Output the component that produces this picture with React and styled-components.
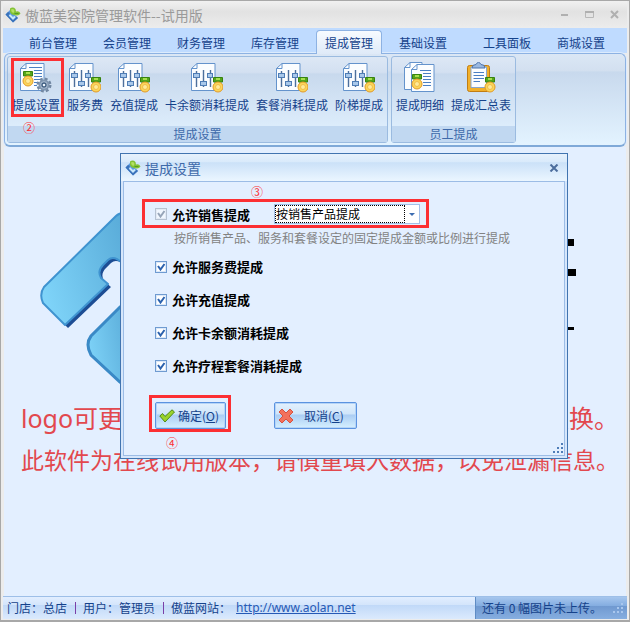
import React, { useState } from 'react';
import styled, { createGlobalStyle } from 'styled-components';

const tabs = ['前台管理', '会员管理', '财务管理', '库存管理', '提成管理', '基础设置', '工具面板', '商城设置'];

const settingTools = [
    { label: '提成设置', icon: 'settings', step: '②' },
    { label: '服务费', icon: 'sliders' },
    { label: '充值提成', icon: 'sliders' },
    { label: '卡余额消耗提成', icon: 'sliders' },
    { label: '套餐消耗提成', icon: 'sliders' },
    { label: '阶梯提成', icon: 'sliders' }
];

const staffTools = [
    { label: '提成明细', icon: 'details' },
    { label: '提成汇总表', icon: 'clipboard' }
];

const options = [
    { name: 'service', label: '允许服务费提成' },
    { name: 'recharge', label: '允许充值提成' },
    { name: 'card', label: '允许卡余额消耗提成' },
    { name: 'package', label: '允许疗程套餐消耗提成' }
];

const bladePath =
    'M84 1 Q79 1 76 4 L4 75 Q-1 82 3 91 L25 113 L68 72 L61 66 Q57 59 63 53 L68 48 Q74 43 82 51 L90 56 V1 Z';

const AppIcon = () => (
    <svg width="16" height="16" viewBox="0 0 16 16">
        <path d="M0.500 7.500 L5 3 L13 11 L8 15.500 Z" fill="#5b9ade" />
        <path d="M0.500 7.500 L8 15.500 L13 11 L11.500 9.500 L8 12.500 L3.500 8 L5 6 L3 5 Z" fill="#3a72ba" />
        <path d="M4.500 8 L8 11.500 L10 9.500" fill="none" stroke="#c9e8fb" strokeWidth="2" />
        <path d="M5 1.500 Q8 -0.500 10.500 2 L11 4.500 Q14 3.500 15.500 6.500 Q14 9 11 8.500 L9.500 8 Q6 8 5 5 Z" fill="#83c235" />
        <path d="M6 2.500 Q9 1 9.500 4 L8.500 6 Q6 5 6 2.500 Z" fill="#b4e163" />
        <path d="M9.500 6.500 L13.500 6.500" stroke="#559c22" />
    </svg>
);

const Medal = ({ x, y }) => (
    <g transform={`translate(${x} ${y})`}>
        <path d="M0.500 0.500 H9.500 V5 H0.500 Z" fill="#55a51c" stroke="#37830e" />
        <path d="M3 1 H7 V3 H3 Z" fill="#a6e04c" />
        <circle cx="5" cy="10" r="5" fill="#fbd65b" stroke="#e39a26" />
        <circle cx="5" cy="10" r="2.500" fill="#ffeb9a" stroke="#f2bd48" />
    </g>
);

const Page = ({ x = 0, y = 0, w = 24 }) => (
    <path
        d={`M${x + 6} ${y + 1.5} H${x + w} V${y + 28.5} H${x + 0.5} V${y + 6.5} Z M${x + 6} ${y + 1.5} V${y + 6.5} H${x + 0.5}`}
        fill="#fbfdff"
        stroke="#6493cc"
    />
);

const ToolIcon = ({ type }) => (
    <svg width="32" height="32" viewBox="0 0 32 32">
        {type === 'sliders' && (
            <>
                <Page />
                <path d="M5.500 9 V25 M12.500 8 V25 M19.500 8 V25" stroke="#4c6f9c" strokeWidth="1.400" />
                <rect x="2.500" y="11.500" width="6" height="4" fill="#a9c8ea" stroke="#4f7db5" />
                <rect x="9.500" y="19.500" width="6" height="4" fill="#a9c8ea" stroke="#4f7db5" />
                <rect x="16.500" y="11.500" width="5" height="4" fill="#a9c8ea" stroke="#4f7db5" />
                <Medal x={22} y={15} />
            </>
        )}
        {type === 'settings' && (
            <>
                <Page />
                <path d="M9 5.500 H22 M14 8.500 H22 M14 11.500 H22 M14 14.500 H22 M14 17.500 H20 M14 20.500 H17 M14 23.500 H17" stroke="#4a7fc4" />
                <Medal x={3} y={9} />
                <g transform="translate(24 23)">
                    <circle r="6" fill="none" stroke="#7187a2" strokeWidth="3" strokeDasharray="2.700 2.012" />
                    <circle r="4.500" fill="#b9cadd" stroke="#8096b0" strokeWidth="2" />
                    <circle r="2" fill="#eef5fc" stroke="#3f5d80" strokeWidth="1.400" />
                </g>
            </>
        )}
        {type === 'details' && (
            <>
                <Page w={18} y={-1} />
                <Page x={7} w={23} y={1} />
                <path d="M16 8.500 H27 M19 11.500 H27 M19 14.500 H27 M19 17.500 H27 M19 20.500 H27 M19 23.500 H27" stroke="#4a7fc4" />
                <Medal x={8} y={12} />
            </>
        )}
        {type === 'clipboard' && (
            <>
                <rect x="2.500" y="3.500" width="22" height="26" rx="2" fill="#f2b02a" stroke="#c17d12" />
                <path d="M6 5 H21.500 V25.500 H6 Z" fill="#fbfdff" stroke="#8aa7cc" />
                <path d="M7 6 Q7 2.500 11 2.500 Q13.500 -2 16 2.500 Q20 2.500 20 6 Z" fill="#9ab8e0" stroke="#4c74ac" />
                <path d="M8.500 10.500 H19 M8.500 13.500 H19 M8.500 16.500 H19 M8.500 19.500 H15" stroke="#4a7fc4" />
                <Medal x={20} y={15} />
            </>
        )}
    </svg>
);

const GripDots = ({ color, className }) => (
    <svg className={className} width="11" height="11" viewBox="0 0 11 11" fill={color}>
        <path d="M8 0h2v2h-2z M4 4h2v2h-2z M8 4h2v2h-2z M0 8h2v2h-2z M4 8h2v2h-2z M8 8h2v2h-2z" />
    </svg>
);

const Tool = ({ label, icon, step }) => (
    <ToolButton type="button">
        <ToolIcon type={icon} />
        {label}
        {step && (
            <Mark $inset="-4px -4px -2px -1px">
                <Step $left="9px" $top="59px">{step}</Step>
            </Mark>
        )}
    </ToolButton>
);

const CommissionDialog = () => {
    const [mode, setMode] = useState('product');
    const [allowed, setAllowed] = useState({ service: true, recharge: true, card: true, package: true });

    const toggle = (e) => {
        setAllowed({ ...allowed, [e.target.name]: e.target.checked });
    };

    return (
        <Dialog role="dialog" aria-labelledby="dialog-title">
            <DialogHeader>
                <AppIcon />
                <DialogTitle id="dialog-title">提成设置</DialogTitle>
                <CloseButton type="button" aria-label="关闭">
                    <svg width="10" height="8" viewBox="0 0 10 8">
                        <path d="M1.500 0.500 L8.500 7.500 M8.500 0.500 L1.500 7.500" stroke="#4c6d9c" strokeWidth="2" />
                    </svg>
                </CloseButton>
            </DialogHeader>
            <Form onSubmit={(e) => e.preventDefault()}>
                <SalesRow>
                    <SalesLabel>
                        <Checkbox type="checkbox" defaultChecked disabled />
                        允许销售提成
                    </SalesLabel>
                    <SelectBox>
                        <Select aria-label="提成方式" value={mode} onChange={(e) => setMode(e.target.value)}>
                            <option value="product">按销售产品提成</option>
                        </Select>
                        <svg width="14" height="18" viewBox="0 0 14 18">
                            <path d="M4 8 H10 L7 11 Z" fill="#3c6cb0" />
                        </svg>
                    </SelectBox>
                    <Mark $inset="-5px -9px -4px -13px">
                        <Step $left="106px" $top="-18px">③</Step>
                    </Mark>
                </SalesRow>
                <Hint>按所销售产品、服务和套餐设定的固定提成金额或比例进行提成</Hint>
                {options.map((o) => (
                    <OptionLabel key={o.name}>
                        <Checkbox type="checkbox" name={o.name} checked={allowed[o.name]} onChange={toggle} />
                        {o.label}
                    </OptionLabel>
                ))}
                <Actions>
                    <ActionButton type="submit" $gap="3px">
                        <svg width="16" height="14" viewBox="0 0 16 14">
                            <path d="M0.800 7 L3.500 4.500 L6 7.500 L13 0.800 L15.500 3 L6 13 Z" fill="#9bd32c" stroke="#4f8a17" />
                        </svg>
                        <span>确定(<u>O</u>)</span>
                        <Mark $inset="-8px -6px -4px -7px">
                            <Step $left="14px" $top="37px">④</Step>
                        </Mark>
                    </ActionButton>
                    <ActionButton type="button" $gap="10px" $wide>
                        <svg width="16" height="16" viewBox="0 0 16 16">
                            <path
                                d="M4 1 L8 5 L12 1 L15 4 L11 8 L15 12 L12 15 L8 11 L4 15 L1 12 L5 8 L1 4 Z"
                                fill="#f2715c"
                                stroke="#d9503d"
                                strokeLinejoin="round"
                            />
                        </svg>
                        <span>取消(<u>C</u>)</span>
                    </ActionButton>
                </Actions>
            </Form>
            <Grip color="#4f7db8" />
        </Dialog>
    );
};

const App = () => {
    const [active, setActive] = useState('提成管理');

    return (
        <Window>
            <GlobalStyle />
            <TitleBar>
                <AppIcon />
                <WindowTitle>傲蓝美容院管理软件--试用版</WindowTitle>
                <WindowButton type="button" aria-label="最小化">
                    <svg width="9" height="9" viewBox="0 0 9 9"><path d="M1 4h7v2h-7z" fill="#b0b0b0" /></svg>
                </WindowButton>
                <WindowButton type="button" aria-label="最大化">
                    <svg width="9" height="9" viewBox="0 0 9 9">
                        <path d="M0.500 1.500 H8.500 V7.500 H0.500 Z" fill="none" stroke="#b8b8b8" />
                        <path d="M0 1h9v2h-9z" fill="#b0b0b0" />
                    </svg>
                </WindowButton>
                <WindowButton type="button" aria-label="关闭">
                    <svg width="9" height="9" viewBox="0 0 9 9"><path d="M1 1 L8 8 M8 1 L1 8" stroke="#b0b0b0" strokeWidth="2" /></svg>
                </WindowButton>
            </TitleBar>
            <TabBar>
                {tabs.map((t) => (
                    <Tab key={t} type="button" $active={t === active} $spaced={t === '工具面板'} onClick={() => setActive(t)}>
                        {t}
                    </Tab>
                ))}
            </TabBar>
            <Ribbon>
                <Group>
                    <Tools>{settingTools.map((t) => <Tool key={t.label} {...t} />)}</Tools>
                    <GroupName>提成设置</GroupName>
                </Group>
                <Group>
                    <Tools>{staffTools.map((t) => <Tool key={t.label} {...t} />)}</Tools>
                    <GroupName>员工提成</GroupName>
                </Group>
            </Ribbon>
            <Workspace>
                <Artwork>
                    <svg width="100" height="172" viewBox="0 0 100 172">
                        <defs>
                            <linearGradient id="blade" x1="0" y1="0.700" x2="1" y2="0.300">
                                <stop offset="0" stopColor="#7fd4f9" />
                                <stop offset="1" stopColor="#5aacd9" />
                            </linearGradient>
                        </defs>
                        <path d={bladePath} transform="translate(3 3)" fill="#1d4d94" />
                        <path d={bladePath} fill="url(#blade)" stroke="#3f93d0" strokeWidth="2" strokeLinejoin="round" />
                        <path
                            d="M90 87 L80 95 L51 124 Q45 132 51 143 L80 170 L90 178 Z"
                            fill="url(#blade)"
                            stroke="#3a89c6"
                            strokeWidth="3"
                        />
                    </svg>
                    <svg width="20" height="172" viewBox="0 0 20 172">
                        <path d="M0 27h14v7h-14z M0 57h16v7h-16z M0 115h14v3h-14z" fill="#000" />
                    </svg>
                </Artwork>
                <Notice $large>
                    <span>logo可更</span>
                    <span>更换。</span>
                </Notice>
                <Notice>此软件为在线试用版本，请慎重填入数据，以免泄漏信息。</Notice>
            </Workspace>
            <StatusBar>
                <StatusInfo>
                    <span>门店：总店</span>
                    <Divider />
                    <span>用户：管理员</span>
                    <Divider />
                    <span>傲蓝网站：</span>
                    <SiteLink href="http://www.aolan.net">http://www.aolan.net</SiteLink>
                </StatusInfo>
                <UploadStatus>
                    还有 0 幅图片未上传。
                    <GripDots color="#a9c7ee" />
                </UploadStatus>
            </StatusBar>
            <CommissionDialog />
        </Window>
    );
};

const GlobalStyle = createGlobalStyle`
    * { box-sizing: border-box; }
    body {
        margin: 0;
        background: #e3efff;
        font-family: "Noto Sans CJK SC", sans-serif;
        font-size: 12px;
        color: #15428b;
    }
    button, select { font: inherit; color: inherit; }
    svg { flex: none; }
`;

const Window = styled.div`
    position: relative;
    display: flex;
    flex-direction: column;
    min-height: 100vh;
    padding: 0 2px 1px;
    border: 1px solid #a8a8a8;
    border-bottom-width: 2px;
    background: #ececec;
`;

const TitleBar = styled.header`
    display: flex;
    align-items: center;
    height: 27px;
    padding: 0 0 0 2px;
    background: linear-gradient(#f1f1f1, #e2e2e2 40%, #ececec);
`;

const WindowTitle = styled.h1`
    flex: 1;
    margin: 0 0 0 4px;
    font-size: 14px;
    font-weight: 400;
    line-height: 24px;
    color: #9a9a9a;
`;

const WindowButton = styled.button`
    display: flex;
    align-items: center;
    justify-content: center;
    width: 25px;
    height: 20px;
    padding: 0;
    border: 0;
    background: none;
`;

const TabBar = styled.nav`
    display: flex;
    align-items: flex-end;
    gap: 8px;
    height: 25px;
    padding-left: 17px;
    background: #bfdbff;
`;

const Tab = styled.button`
    position: relative;
    z-index: 1;
    width: 66px;
    height: 24px;
    margin: 0 0 -1px;
    margin-left: ${({ $spaced }) => ($spaced ? '10px' : '0')};
    padding: 0;
    border: 1px solid ${({ $active }) => ($active ? '#8db2e3' : 'transparent')};
    border-bottom: 0;
    border-radius: 4px 4px 0 0;
    background: ${({ $active }) => ($active ? 'linear-gradient(#f7fbff, #dfeaf8)' : 'none')};
    line-height: 22px;
    white-space: nowrap;
`;

const Ribbon = styled.section`
    display: flex;
    gap: 3px;
    padding: 2px;
    border: 1px solid #8db2e3;
    border-bottom: 2px solid #7fa9d8;
    border-radius: 6px;
    margin: 0 1px;
    background: linear-gradient(#dbe7f5, #d3e0f0 18%, #c8d9ed 20%, #e3f3ff);
    box-shadow: 0 0 0 1px #dcebfd;
`;

const Group = styled.div`
    border: 1px solid #9bbbe0;
    border-radius: 3px;
    background: linear-gradient(#dde8f5, #d3e0f1 18%, #c8d9ed 20%, #dcecfb 80%);
`;

const Tools = styled.div`
    display: flex;
    gap: 7px;
    height: 69px;
    padding: 5px 4px 0;
`;

const ToolButton = styled.button`
    position: relative;
    display: flex;
    flex-direction: column;
    align-items: center;
    height: 53px;
    padding: 0;
    border: 0;
    background: none;
    line-height: 21px;
    white-space: nowrap;
`;

const GroupName = styled.div`
    height: 16px;
    background: #c1d8f1;
    color: #3e6aaa;
    line-height: 16px;
    text-align: center;
`;

const Mark = styled.span`
    position: absolute;
    inset: ${({ $inset }) => $inset};
    border: 3px solid #fc2f33;
    pointer-events: none;
`;

const Step = styled.span`
    position: absolute;
    left: ${({ $left }) => $left};
    top: ${({ $top }) => $top};
    font-size: 12px;
    font-weight: 400;
    line-height: 16px;
    color: #fc2f33;
`;

const Workspace = styled.main`
    flex: 1;
    margin: 0 1px;
    padding: 65px 7px 0 17px;
    background: #e3efff;
`;

const Artwork = styled.div`
    display: flex;
    justify-content: space-between;
    margin-bottom: 13px;
    padding: 0 39px 0 19px;
`;

const Notice = styled.p`
    display: flex;
    justify-content: space-between;
    margin: 0;
    font-family: "Noto Sans", "Noto Sans CJK SC", sans-serif;
    font-size: ${({ $large }) => ($large ? '25px' : '23px')};
    line-height: 42px;
    color: #e2484e;
    white-space: nowrap;
`;

const StatusBar = styled.footer`
    display: flex;
    height: 23px;
    border-top: 1px solid #9ebfe8;
    line-height: 22px;
`;

const StatusInfo = styled.div`
    display: flex;
    flex: 1;
    padding-left: 4px;
    background: linear-gradient(#e2eeff, #d4e5fb 35%, #c1d9f8 38%, #dbeafd);
`;

const Divider = styled.span`
    width: 1px;
    height: 12px;
    margin: 5px 7px 0 8px;
    background: #7a3fa8;
`;

const SiteLink = styled.a`
    margin-left: 5px;
    font-family: "Noto Sans", sans-serif;
    font-size: 12px;
    color: #2659b5;
`;

const UploadStatus = styled.div`
    display: flex;
    align-items: center;
    justify-content: space-between;
    width: 152px;
    padding: 0 3px 0 6px;
    border-left: 1px solid #5f8cc4;
    background: linear-gradient(#a6c6ee, #84ade0 40%, #7099d0 42%, #86aee0);
`;

const Dialog = styled.section`
    position: absolute;
    left: 119px;
    top: 152px;
    width: 448px;
    padding: 0 2px 2px;
    border: 1px solid #4174b0;
    background: #d6e6fb;
`;

const DialogHeader = styled.div`
    display: flex;
    align-items: center;
    height: 27px;
    margin: 0 -2px;
    padding: 0 8px 0 4px;
    background: linear-gradient(#e6f1fc, #d9eafb 30%, #cbe1f8 32%, #ebf6ff);
`;

const DialogTitle = styled.h2`
    flex: 1;
    margin: 0 0 0 4px;
    font-size: 14px;
    font-weight: 400;
    line-height: 24px;
    color: #3e6aaa;
`;

const CloseButton = styled.button`
    display: flex;
    padding: 0;
    border: 0;
    background: none;
`;

const Form = styled.form`
    padding: 22px 0 26px 31px;
    border: 1px solid #9cbce6;
    background: #e3efff;
`;

const SalesRow = styled.div`
    position: relative;
    display: flex;
    align-items: center;
    width: 265px;
    height: 20px;
`;

const OptionLabel = styled.label`
    display: flex;
    align-items: center;
    gap: 5px;
    height: 33px;
    font-size: 13px;
    font-weight: 700;
    color: #000;
`;

const SalesLabel = styled(OptionLabel)`
    width: 119px;
    height: 20px;
`;

const Checkbox = styled.input`
    appearance: none;
    width: 12px;
    height: 12px;
    margin: 0;
    border: 1px solid #6f9bd1;
    background: #fff;
    box-shadow: inset 0 0 0 1px #dbe8f8;

    &:checked {
        background: #fff url('data:image/svg+xml,<svg xmlns="http://www.w3.org/2000/svg" viewBox="0 0 10 10"><path d="M2 4 L4.500 7.500 L8.500 2" fill="none" stroke="%232c62ae" stroke-width="2"/></svg>');
    }
    &:disabled { opacity: 0.5; filter: saturate(0.3); }
`;

const SelectBox = styled.div`
    display: flex;
    width: 146px;
    height: 20px;
    border: 1px solid #a3c0e8;
    background: #fff;
`;

const Select = styled.select`
    appearance: none;
    flex: 1;
    height: 18px;
    padding: 0;
    border: 1px dotted #000;
    border-radius: 0;
    background: #fff;
    color: #000;
    line-height: 16px;
`;

const Hint = styled.p`
    margin: 6px 0 4px 19px;
    color: #828282;
    line-height: 16px;
`;

const Actions = styled.div`
    display: flex;
    gap: 48px;
    margin-top: 20px;
`;

const ActionButton = styled.button`
    position: relative;
    display: flex;
    align-items: center;
    gap: ${({ $gap }) => $gap};
    width: ${({ $wide }) => ($wide ? '83px' : '71px')};
    height: 27px;
    padding: 0 3px;
    border: 1px solid #5b93e0;
    border-radius: 2px;
    background: linear-gradient(#e4f1fd, #cfe5fa 45%, #aaccf3 47%, #d5f0ff);
    box-shadow: inset 0 0 0 1px #b5d4f7;
    white-space: nowrap;
`;

const Grip = styled(GripDots)`
    position: absolute;
    right: 3px;
    bottom: 4px;
`;

export default App;
